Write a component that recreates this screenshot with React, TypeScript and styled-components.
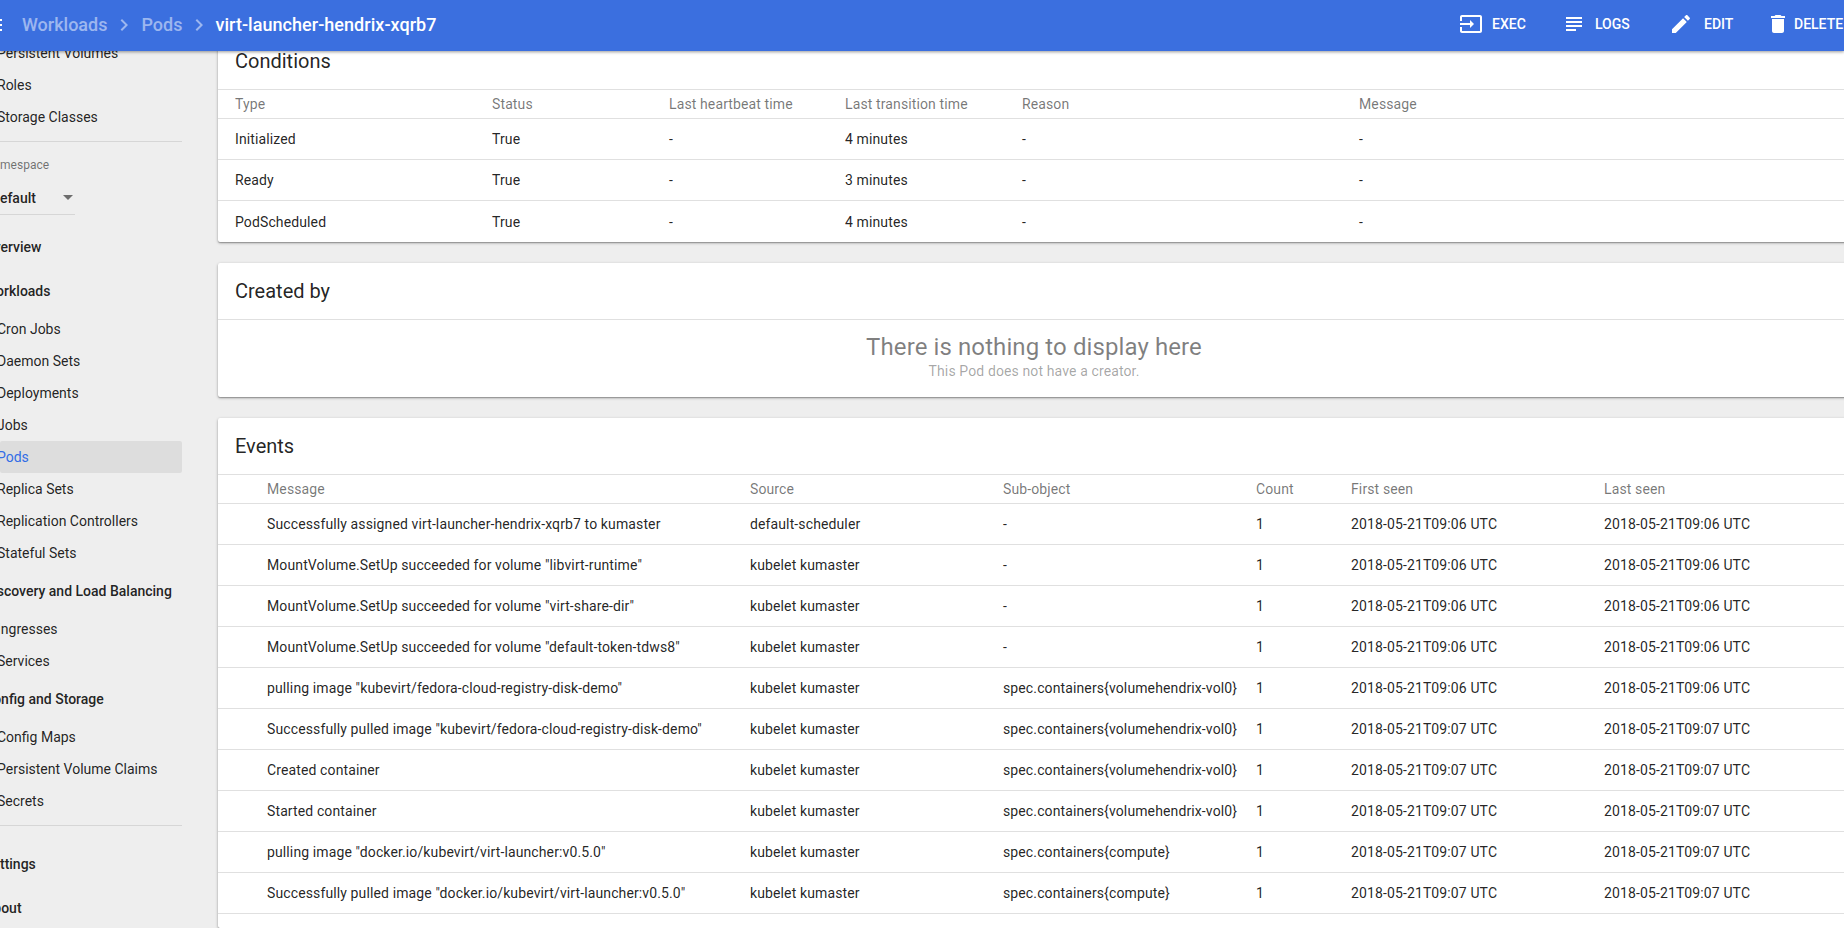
import React from "react";
import styled, { createGlobalStyle } from "styled-components";

const GlobalStyle = createGlobalStyle`
  html, body {
    margin: 0;
    height: 100%;
    overflow: hidden;
    background: #eeeeee;
    font-family: Roboto, "Liberation Sans", sans-serif;
    color: rgba(0, 0, 0, 0.87);
  }
`;

const Page = styled.div`
  display: flex;
  flex-direction: column;
  height: 928px;
  overflow: hidden;
`;

const Toolbar = styled.header`
  position: relative;
  z-index: 2;
  flex: 0 0 51px;
  box-sizing: border-box;
  padding-bottom: 2px;
  display: flex;
  align-items: center;
  background: #3b6fdf;
  color: #fff;
  box-shadow: 0 1px 3px rgba(0, 0, 0, 0.4);
`;

const MenuStub = styled.svg`
  flex: 0 0 2px;
  width: 2px;
  height: 12px;
  margin-right: 20px;
  fill: #fff;
`;

const Crumb = styled.span<{ $current?: boolean }>`
  font-size: 18px;
  font-weight: 500;
  margin-left: ${({ $current }) => ($current ? -1 : 0)}px;
  letter-spacing: ${({ $current }) => ($current ? 0.04 : 0)}px;
  color: ${({ $current }) => ($current ? "#fff" : "rgba(255, 255, 255, 0.5)")};
`;

const CrumbArrow = styled.svg`
  width: 24px;
  height: 24px;
  margin: 0 5px;
  fill: rgba(255, 255, 255, 0.5);
`;

const Actions = styled.div`
  display: flex;
  align-items: center;
  margin-left: auto;
  margin-right: -8px;
  margin-bottom: 2px;
  min-width: 0;
`;

const Action = styled.div<{ $width: number; $gap?: number }>`
  flex: 0 0 ${({ $width }) => $width}px;
  display: flex;
  align-items: center;
  gap: ${({ $gap }) => $gap ?? 9}px;
  font-size: 14px;
  font-weight: 500;
  white-space: nowrap;
`;

const ActionIcon = styled.svg`
  flex: 0 0 24px;
  width: 24px;
  height: 24px;
  fill: #fff;
`;

const Body = styled.div`
  flex: 1;
  display: flex;
  min-height: 0;
`;

const Sidebar = styled.nav`
  flex: 0 0 218px;
  overflow: hidden;
  background: #eeeeee;
`;

const SidebarInner = styled.div`
  width: 182px;
  margin-top: -14px;
`;

const NavHeading = styled.div<{ $mt?: number; $mb?: number }>`
  height: 32px;
  line-height: 32px;
  margin-top: ${({ $mt }) => $mt ?? 0}px;
  margin-bottom: ${({ $mb }) => $mb ?? 0}px;
  margin-left: -16px;
  font-size: 14px;
  font-weight: 500;
  white-space: nowrap;
`;

const NavItem = styled.div<{ $active?: boolean }>`
  height: 32px;
  line-height: 32px;
  font-size: 14px;
  text-indent: -3px;
  white-space: nowrap;
  border-radius: 2px;
  color: ${({ $active }) => ($active ? "#326de6" : "rgba(0, 0, 0, 0.87)")};
  background: ${({ $active }) => ($active ? "#dddddd" : "transparent")};
`;

const NavDivider = styled.hr<{ $mt: number }>`
  height: 1px;
  margin: ${({ $mt }) => $mt}px 0 0;
  border: 0;
  background: #d6d6d6;
`;

const NamespaceLabel = styled.div`
  margin: 16px 0 0 -15px;
  height: 14px;
  line-height: 14px;
  font-size: 12px;
  color: rgba(0, 0, 0, 0.54);
`;

const NamespaceSelect = styled.div`
  display: flex;
  align-items: center;
  width: 75px;
  height: 33px;
  margin-top: 9px;
  border-bottom: 1px solid #d6d6d6;
  font-size: 14px;
  font-weight: 500;
`;

const NamespaceValue = styled.span`
  margin-left: -8px;
`;

const Caret = styled.span`
  width: 0;
  height: 0;
  margin-left: auto;
  margin-right: 2px;
  border-left: 5px solid transparent;
  border-right: 5px solid transparent;
  border-top: 5px solid rgba(0, 0, 0, 0.54);
`;

const Main = styled.main`
  flex: 1;
  min-width: 0;
  display: flex;
  flex-direction: column;
  gap: 21px;
  margin-top: -18px;
`;

const Card = styled.section<{ $grow?: boolean }>`
  flex: ${({ $grow }) => ($grow ? "1 0 auto" : "0 0 auto")};
  width: 1632px;
  background: #fff;
  border-radius: 2px;
  box-shadow: 0 1px 3px rgba(0, 0, 0, 0.32), 0 1px 1px rgba(0, 0, 0, 0.2);
`;

const CardTitle = styled.h2`
  margin: 0;
  height: 57px;
  line-height: 56px;
  padding-left: 17px;
  font-size: 20px;
  font-weight: 400;
  border-bottom: 1px solid #e0e0e0;
  box-sizing: border-box;
`;

const Row = styled.div<{ $columns: string; $header?: boolean }>`
  display: grid;
  grid-template-columns: ${({ $columns }) => $columns};
  align-items: center;
  box-sizing: border-box;
  height: ${({ $header }) => ($header ? 29 : 41)}px;
  font-size: 14px;
  letter-spacing: 0.12px;
  color: ${({ $header }) => ($header ? "rgba(0, 0, 0, 0.54)" : "rgba(0, 0, 0, 0.87)")};
  border-bottom: 1px solid #e0e0e0;
  white-space: nowrap;
`;

const LastRow = styled(Row)`
  border-bottom: 0;
`;

const Empty = styled.div`
  height: 77px;
  box-sizing: border-box;
  padding-top: 12px;
  text-align: center;
`;

const EmptyTitle = styled.div`
  height: 31px;
  line-height: 31px;
  font-size: 24px;
  letter-spacing: 0.1px;
  color: rgba(0, 0, 0, 0.5);
`;

const EmptyText = styled.div`
  height: 16px;
  line-height: 16px;
  font-size: 14px;
  letter-spacing: 0.12px;
  color: rgba(0, 0, 0, 0.36);
`;

const conditionColumns = "17px 257px 177px 176px 177px 337px 1fr";
const eventColumns = "49px 483px 253px 253px 95px 253px 1fr";

const conditions = [
  ["Initialized", "True", "-", "4 minutes", "-", "-"],
  ["Ready", "True", "-", "3 minutes", "-", "-"],
  ["PodScheduled", "True", "-", "4 minutes", "-", "-"],
];

const sched = "2018-05-21T09:06 UTC";
const pulled = "2018-05-21T09:07 UTC";
const volume = "spec.containers{volumehendrix-vol0}";
const compute = "spec.containers{compute}";

const events = [
  ['Successfully assigned virt-launcher-hendrix-xqrb7 to kumaster', "default-scheduler", "-", sched],
  ['MountVolume.SetUp succeeded for volume "libvirt-runtime"', "kubelet kumaster", "-", sched],
  ['MountVolume.SetUp succeeded for volume "virt-share-dir"', "kubelet kumaster", "-", sched],
  ['MountVolume.SetUp succeeded for volume "default-token-tdws8"', "kubelet kumaster", "-", sched],
  ['pulling image "kubevirt/fedora-cloud-registry-disk-demo"', "kubelet kumaster", volume, sched],
  ['Successfully pulled image "kubevirt/fedora-cloud-registry-disk-demo"', "kubelet kumaster", volume, pulled],
  ["Created container", "kubelet kumaster", volume, pulled],
  ["Started container", "kubelet kumaster", volume, pulled],
  ['pulling image "docker.io/kubevirt/virt-launcher:v0.5.0"', "kubelet kumaster", compute, pulled],
  ['Successfully pulled image "docker.io/kubevirt/virt-launcher:v0.5.0"', "kubelet kumaster", compute, pulled],
];

const Chevron = () => (
  <CrumbArrow viewBox="0 0 24 24">
    <path d="M10 6 8.59 7.41 13.17 12l-4.58 4.59L10 18l6-6z" />
  </CrumbArrow>
);

const App = (): JSX.Element => {
  return (
    <Page>
      <GlobalStyle />
      <Toolbar>
        <MenuStub viewBox="0 0 2 12">
          <rect y="0" width="2" height="2" />
          <rect y="5" width="2" height="2" />
          <rect y="10" width="2" height="2" />
        </MenuStub>
        <Crumb>Workloads</Crumb>
        <Chevron />
        <Crumb>Pods</Crumb>
        <Chevron />
        <Crumb $current>virt-launcher-hendrix-xqrb7</Crumb>
        <Actions>
          <Action $width={103}>
            <ActionIcon viewBox="0 0 24 24">
              <path d="M21 3.01H3c-1.1 0-2 .9-2 2V9h2V4.99h18v14.03H3V15H1v4.01c0 1.1.9 1.98 2 1.98h18c1.1 0 2-.88 2-1.98v-14c0-1.11-.9-2-2-2zM11 16l4-4-4-4v3H1v2h10v3z" />
            </ActionIcon>
            EXEC
          </Action>
          <Action $width={107}>
            <ActionIcon viewBox="0 0 24 24">
              <path d="M14 17H4v2h10v-2zm6-8H4v2h16V9zM4 15h16v-2H4v2zM4 5v2h16V5H4z" />
            </ActionIcon>
            LOGS
          </Action>
          <Action $width={97} $gap={11}>
            <ActionIcon viewBox="0 0 24 24">
              <path d="M3 17.25V21h3.75L17.81 9.94l-3.75-3.75L3 17.25zM20.71 7.04c.39-.39.39-1.02 0-1.41l-2.34-2.34c-.39-.39-1.02-.39-1.41 0l-1.83 1.83 3.75 3.75 1.83-1.83z" />
            </ActionIcon>
            EDIT
          </Action>
          <Action $width={86} $gap={4}>
            <ActionIcon viewBox="0 0 24 24">
              <path d="M6 19c0 1.1.9 2 2 2h8c1.1 0 2-.9 2-2V7H6v12zM19 4h-3.5l-1-1h-5l-1 1H5v2h14V4z" />
            </ActionIcon>
            DELETE
          </Action>
        </Actions>
      </Toolbar>
      <Body>
        <Sidebar>
          <SidebarInner>
            <NavItem>Persistent Volumes</NavItem>
            <NavItem>Roles</NavItem>
            <NavItem>Storage Classes</NavItem>
            <NavDivider $mt={8} />
            <NamespaceLabel>Namespace</NamespaceLabel>
            <NamespaceSelect>
              <NamespaceValue>default</NamespaceValue>
              <Caret />
            </NamespaceSelect>
            <NavHeading $mt={16}>Overview</NavHeading>
            <NavHeading $mt={12} $mb={6}>Workloads</NavHeading>
            <NavItem>Cron Jobs</NavItem>
            <NavItem>Daemon Sets</NavItem>
            <NavItem>Deployments</NavItem>
            <NavItem>Jobs</NavItem>
            <NavItem $active>Pods</NavItem>
            <NavItem>Replica Sets</NavItem>
            <NavItem>Replication Controllers</NavItem>
            <NavItem>Stateful Sets</NavItem>
            <NavHeading $mt={6} $mb={6}>Discovery and Load Balancing</NavHeading>
            <NavItem>Ingresses</NavItem>
            <NavItem>Services</NavItem>
            <NavHeading $mt={6} $mb={6}>Config and Storage</NavHeading>
            <NavItem>Config Maps</NavItem>
            <NavItem>Persistent Volume Claims</NavItem>
            <NavItem>Secrets</NavItem>
            <NavDivider $mt={8} />
            <NavHeading $mt={22}>Settings</NavHeading>
            <NavHeading $mt={12}>About</NavHeading>
          </SidebarInner>
        </Sidebar>
        <Main>
          <Card>
            <CardTitle>Conditions</CardTitle>
            <Row $header $columns={conditionColumns}>
              <span />
              <span>Type</span>
              <span>Status</span>
              <span>Last heartbeat time</span>
              <span>Last transition time</span>
              <span>Reason</span>
              <span>Message</span>
            </Row>
            {conditions.map((c, i) => {
              const R = i === conditions.length - 1 ? LastRow : Row;
              return (
                <R key={c[0]} $columns={conditionColumns}>
                  <span />
                  {c.map((v, j) => (
                    <span key={j}>{v}</span>
                  ))}
                </R>
              );
            })}
          </Card>
          <Card>
            <CardTitle>Created by</CardTitle>
            <Empty>
              <EmptyTitle>There is nothing to display here</EmptyTitle>
              <EmptyText>This Pod does not have a creator.</EmptyText>
            </Empty>
          </Card>
          <Card $grow>
            <CardTitle>Events</CardTitle>
            <Row $header $columns={eventColumns}>
              <span />
              <span>Message</span>
              <span>Source</span>
              <span>Sub-object</span>
              <span>Count</span>
              <span>First seen</span>
              <span>Last seen</span>
            </Row>
            {events.map((e) => (
              <Row key={e[0]} $columns={eventColumns}>
                <span />
                <span>{e[0]}</span>
                <span>{e[1]}</span>
                <span>{e[2]}</span>
                <span>1</span>
                <span>{e[3]}</span>
                <span>{e[3]}</span>
              </Row>
            ))}
          </Card>
        </Main>
      </Body>
    </Page>
  );
};

export default App;
